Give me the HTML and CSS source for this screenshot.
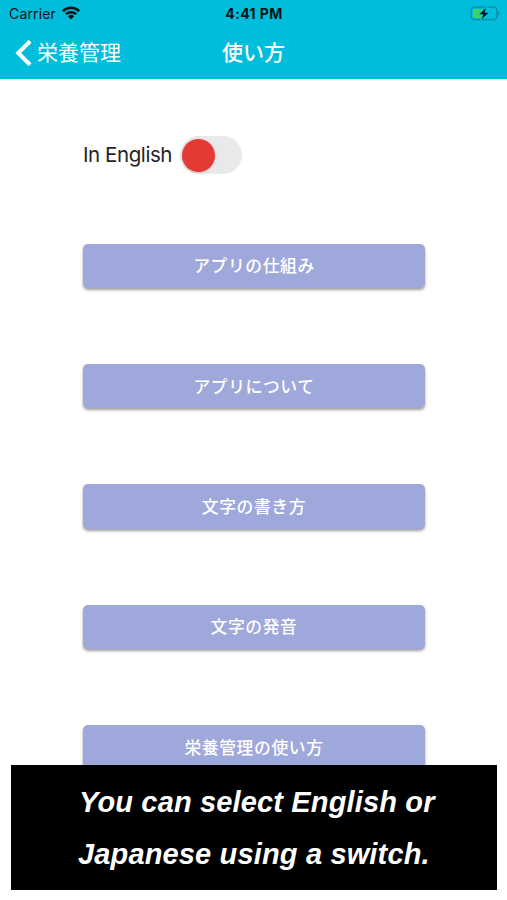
FILE: index.html
```html
<!DOCTYPE html>
<html lang="ja">
<head>
<meta charset="utf-8">
<title>使い方</title>
<link rel="stylesheet" href="styles.css">
</head>
<body>
<div class="screen">
  <header class="header">
    <div class="status">
      <div class="carrier"><span>Carrier</span>
        <svg class="wifi" viewBox="0 0 20 15" width="20" height="15"><path d="M1.9 6.1a11.4 11.4 0 0 1 16.2 0M4.9 9.2a7.2 7.2 0 0 1 10.2 0" fill="none" stroke="#061316" stroke-width="2.6"/><path d="M6.9 11.3a4.5 4.5 0 0 1 6.2 0L10 14.5z" fill="#061316"/></svg>
      </div>
      <div class="time">4:41 PM</div>
      <svg class="battery" viewBox="0 0 31 15" width="31" height="15"><rect x="1.1" y="1.1" width="25.8" height="12.6" rx="3.4" fill="none" stroke="#087f90" stroke-width="1"/><rect x="3" y="3" width="9" height="8.8" rx="1.5" fill="#43d05f"/><path d="M28.3 5.2q2.2 2.2 0 4.4z" fill="#087f90"/><path d="M16.1.4 7.8 8.6h4.3l-1.8 6 8.8-8.3h-4.3L17.6.4z" fill="#00bddb"/><path d="M16 2.1 9.5 8.2h4l-1.6 4.7L18.4 6.8h-4z" fill="#061316"/></svg>
    </div>
    <nav class="nav">
      <a class="back"><svg viewBox="0 0 18 28" width="18" height="28"><path d="M15.1 2.3 3.2 14l11.9 11.7" fill="none" stroke="#fff" stroke-width="4"/></svg><span>栄養管理</span></a>
      <h1 class="title">使い方</h1>
      <span></span>
    </nav>
  </header>
  <main class="content">
    <label class="language"><span class="language-label">In English</span><span class="switch"><span class="knob"></span></span></label>
    <div class="menu">
      <button class="button">アプリの仕組み</button>
      <button class="button">アプリについて</button>
      <button class="button">文字の書き方</button>
      <button class="button">文字の発音</button>
      <button class="button">栄養管理の使い方</button>
    </div>
  </main>
  <div class="caption"><span class="line-one">You can select English or</span><span class="line-two">Japanese using a switch.</span></div>
</div>
</body>
</html>
```
FILE: styles.css
```css
* { box-sizing: border-box; }
body { margin: 0; background: #fff; font-family: Inter, "Noto Sans CJK JP", sans-serif; }
.screen { position: relative; width: 507px; height: 900px; overflow: hidden; }
.header { height: 79px; background: #00bddb; }
.status { display: grid; grid-template-columns: 1fr auto 1fr; height: 27px; align-items: center; padding: 0 6px 0 9px; color: #061316; }
.carrier { display: flex; align-items: center; gap: 5px; font-size: 14px; letter-spacing: .15px; }
.wifi { margin-top: -3px; }
.time { margin-right: 2px; font-size: 14px; font-weight: 700; letter-spacing: .4px; }
.battery { justify-self: end; }
.nav { display: grid; grid-template-columns: 1fr auto 1fr; align-items: center; height: 51px; padding: 0 15px; color: #fff; font-family: "Noto Sans CJK JP", sans-serif; }
.back { display: flex; align-items: center; gap: 4px; font-size: 21px; line-height: 30px; }
.back span { margin-top: -4px; }
.title { margin: -3px 0 0; font-size: 21px; line-height: 30px; font-weight: 500; }
.content { padding: 57px 82px 0 83px; }
.language { display: flex; align-items: center; justify-content: space-between; width: 159px; height: 38px; }
.language-label { margin-top: -2px; font-size: 20.5px; letter-spacing: -.42px; color: #252525; white-space: nowrap; }
.switch { display: flex; align-items: center; width: 62px; height: 38px; padding-left: 2px; border-radius: 19px; background: #e9e9eb; }
.knob { width: 33px; height: 33px; border-radius: 50%; background: #e53935; box-shadow: 0 1px 3px rgba(0,0,0,.16); }
.menu { display: grid; gap: 75.8px; margin-top: 69.7px; }
.button { width: 342px; height: 44.5px; border: 0; border-radius: 5px; padding: 0 0 1px; background: #9fa8da; color: #fff; font: 500 16.8px/24px "Noto Sans CJK JP", sans-serif; letter-spacing: .6px; box-shadow: 0 2px 3px rgba(0,0,0,.38); }
.caption { position: absolute; left: 11px; top: 765px; width: 486px; height: 125px; padding-top: 11px; background: #000; color: #fff; font: italic 700 29px/52px "Liberation Sans", sans-serif; letter-spacing: .15px; }
.caption span { display: block; white-space: nowrap; }
.line-one { padding-left: 68px; }
.line-two { padding-left: 67px; }
```
